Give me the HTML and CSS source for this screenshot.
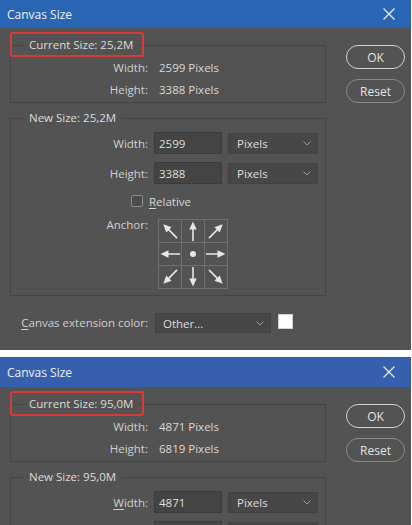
FILE: index.html
```html
<!DOCTYPE html>
<html lang="en">
<head>
  <meta charset="UTF-8">
  <meta name="viewport" content="width=device-width, initial-scale=1.0">
  <title>Canvas Size</title>
  <link rel="stylesheet" href="styles.css">
</head>
<body>
  <!-- shared arrow glyph for the anchor grid -->
  <svg class="defs" width="0" height="0" aria-hidden="true">
    <symbol id="arrow" viewBox="0 0 22 22">
      <line x1="11" y1="8" x2="11" y2="21" stroke="#e6e6e6" stroke-width="1.6"/>
      <polygon points="11,1.5 7.3,9.5 14.7,9.5" fill="#e6e6e6"/>
    </symbol>
    <symbol id="chevron" viewBox="0 0 8 5">
      <polyline points="0.5,0.5 4,4 7.5,0.5" fill="none" stroke="#9c9c9c" stroke-width="1"/>
    </symbol>
    <symbol id="close" viewBox="0 0 12 12">
      <line x1="0.5" y1="0.5" x2="11.5" y2="11.5" stroke="#e6ecf6" stroke-width="1.3"/>
      <line x1="11.5" y1="0.5" x2="0.5" y2="11.5" stroke="#e6ecf6" stroke-width="1.3"/>
    </symbol>
  </svg>

  <div class="screen">

    <div class="dialog">
      <div class="titlebar">
        <span>Canvas Size</span>
        <svg class="close" width="12" height="12"><use href="#close"/></svg>
      </div>
      <div class="dialog-body">
        <div class="main">
          <fieldset class="group current">
            <legend>Current Size: 25,2M<span class="highlight"></span></legend>
            <div class="row"><span class="label">Width:</span><span class="value">2599 Pixels</span></div>
            <div class="row"><span class="label">Height:</span><span class="value">3388 Pixels</span></div>
          </fieldset>

          <fieldset class="group new">
            <legend>New Size: 25,2M</legend>
            <div class="row">
              <span class="label">Width:</span>
              <div class="fields">
                <input class="field" type="text" value="2599">
                <div class="select"><span>Pixels</span><svg width="8" height="5"><use href="#chevron"/></svg></div>
              </div>
            </div>
            <div class="row">
              <span class="label">Height:</span>
              <div class="fields">
                <input class="field" type="text" value="3388">
                <div class="select"><span>Pixels</span><svg width="8" height="5"><use href="#chevron"/></svg></div>
              </div>
            </div>
            <div class="check-row">
              <span class="checkbox"></span>
              <span><u>R</u>elative</span>
            </div>
            <div class="row anchor-row">
              <span class="label">Anchor:</span>
              <div class="anchor">
                <span class="cell"><svg class="nw"><use href="#arrow"/></svg></span>
                <span class="cell"><svg><use href="#arrow"/></svg></span>
                <span class="cell"><svg class="ne"><use href="#arrow"/></svg></span>
                <span class="cell"><svg class="w"><use href="#arrow"/></svg></span>
                <span class="cell"><svg viewBox="0 0 22 22"><circle cx="11" cy="11" r="3" fill="#e6e6e6"/></svg></span>
                <span class="cell"><svg class="e"><use href="#arrow"/></svg></span>
                <span class="cell"><svg class="sw"><use href="#arrow"/></svg></span>
                <span class="cell"><svg class="s"><use href="#arrow"/></svg></span>
                <span class="cell"><svg class="se"><use href="#arrow"/></svg></span>
              </div>
            </div>
          </fieldset>

          <div class="ext-row">
            <span class="label"><u>C</u>anvas extension color:</span>
            <div class="select wide"><span>Other...</span><svg width="8" height="5"><use href="#chevron"/></svg></div>
            <span class="swatch"></span>
          </div>
        </div>

        <div class="actions">
          <button class="btn primary">OK</button>
          <button class="btn">Reset</button>
        </div>
      </div>
    </div>

    <div class="dialog second">
      <div class="titlebar">
        <span>Canvas Size</span>
        <svg class="close" width="12" height="12"><use href="#close"/></svg>
      </div>
      <div class="dialog-body">
        <div class="main">
          <fieldset class="group current">
            <legend>Current Size: 95,0M<span class="highlight"></span></legend>
            <div class="row"><span class="label">Width:</span><span class="value">4871 Pixels</span></div>
            <div class="row"><span class="label">Height:</span><span class="value">6819 Pixels</span></div>
          </fieldset>

          <fieldset class="group new">
            <legend>New Size: 95,0M</legend>
            <div class="row">
              <span class="label"><u>W</u>idth:</span>
              <div class="fields">
                <input class="field" type="text" value="4871">
                <div class="select"><span>Pixels</span><svg width="8" height="5"><use href="#chevron"/></svg></div>
              </div>
            </div>
            <div class="row">
              <span class="label"><u>H</u>eight:</span>
              <div class="fields">
                <input class="field" type="text" value="6819">
                <div class="select"><span>Pixels</span><svg width="8" height="5"><use href="#chevron"/></svg></div>
              </div>
            </div>
          </fieldset>
        </div>

        <div class="actions">
          <button class="btn primary">OK</button>
          <button class="btn">Reset</button>
        </div>
      </div>
    </div>

  </div>
</body>
</html>
```

FILE: styles.css
```css
html, body {
  margin: 0;
  padding: 0;
}

body {
  background-color: #ffffff;
  font-family: 'Open Sans', 'Noto Sans', sans-serif;
  font-size: 11.5px;
  color: #d6d6d6;
}

.defs {
  position: absolute;
  width: 0;
  height: 0;
}

.screen {
  height: 525px;
  overflow: hidden;
}

u {
  text-decoration: underline;
  text-underline-offset: 2px;
}

/* Dialog window */
.dialog {
  width: 411px;
  background-color: #535353;
}

.dialog + .dialog {
  margin-top: 7px;
}

.titlebar {
  height: 28px;
  background-color: #2b66b4;
  color: #eef2f9;
  font-size: 12px;
  display: flex;
  align-items: center;
  justify-content: space-between;
  padding: 0 16px 0 7px;
}

.dialog.second .titlebar {
  height: 30px;
  background-color: #3660ad;
}

.close {
  display: block;
}

.dialog-body {
  display: flex;
  align-items: flex-start;
  height: 322px;
}

.main {
  margin-left: 10px;
  width: 316px;
  padding-top: 9px;
}

/* Group boxes */
.group {
  margin: 0;
  padding: 3px 0 2px;
  border: 1px solid #454545;
  min-width: 0;
}

.group legend {
  position: relative;
  margin-left: 12px;
  padding: 0 6px;
  line-height: 16px;
  color: #dadada;
}

.group.new {
  margin-top: 7px;
  padding: 6px 0 6px;
}

.highlight {
  position: absolute;
  left: -13px;
  right: -5px;
  top: -5px;
  bottom: -4px;
  border: 2px solid #d8393a;
  border-radius: 2px;
}

.row {
  display: grid;
  grid-template-columns: 137px 1fr;
  column-gap: 6px;
  height: 22px;
  align-items: center;
}

.group.new .row + .row {
  margin-top: 8px;
}

.label {
  text-align: right;
  color: #cfcfcf;
}

.value {
  padding-left: 5px;
  color: #d8d8d8;
}

.fields {
  display: flex;
  align-items: center;
}

.field {
  box-sizing: border-box;
  width: 68px;
  height: 22px;
  margin: 0;
  padding: 0 0 0 4px;
  background-color: #444444;
  border: 1px solid #3c3c3c;
  color: #dedede;
  font: inherit;
  outline: none;
}

.select {
  box-sizing: border-box;
  width: 90px;
  height: 21px;
  margin-left: 6px;
  padding: 0 6px 0 8px;
  display: flex;
  align-items: center;
  justify-content: space-between;
  background-color: #474747;
  border: 1px solid #424242;
  color: #dedede;
}

.select svg {
  display: block;
}

.check-row {
  display: flex;
  align-items: center;
  height: 22px;
  margin-top: 6px;
  padding-left: 120px;
  color: #d6d6d6;
}

.checkbox {
  box-sizing: border-box;
  width: 12px;
  height: 12px;
  margin-right: 6px;
  border: 1px solid #8c8c8c;
  border-radius: 2px;
  background-color: #4b4b4b;
}

/* Anchor grid */
.anchor-row {
  height: auto;
  align-items: start;
  margin-top: 7px;
}

.anchor-row .label {
  line-height: 16px;
  margin-top: -2px;
}

.anchor {
  margin-left: 4px;
  width: 70px;
  display: grid;
  grid-template-columns: repeat(3, 22px);
  grid-auto-rows: 22px;
  gap: 1px;
  padding: 1px;
  box-sizing: border-box;
  background-color: #6f6f6f;
}

.cell {
  background-color: #535353;
}

.cell svg {
  display: block;
  width: 22px;
  height: 22px;
}

.cell .ne { transform: rotate(45deg); }
.cell .e  { transform: rotate(90deg); }
.cell .se { transform: rotate(135deg); }
.cell .s  { transform: rotate(180deg); }
.cell .sw { transform: rotate(225deg); }
.cell .w  { transform: rotate(270deg); }
.cell .nw { transform: rotate(315deg); }

/* Extension color */
.ext-row {
  display: flex;
  align-items: flex-start;
  margin-top: 17px;
}

.ext-row .label {
  width: 138px;
  line-height: 20px;
}

.select.wide {
  width: 116px;
  height: 20px;
  margin-left: 7px;
  padding-left: 7px;
}

.swatch {
  box-sizing: border-box;
  width: 15px;
  height: 15px;
  margin: 1px 0 0 7px;
  background-color: #ffffff;
  border: 1px solid #d0d0d0;
}

/* Buttons */
.actions {
  margin-left: 20px;
  padding-top: 17px;
  display: flex;
  flex-direction: column;
  gap: 10px;
}

.btn {
  box-sizing: border-box;
  width: 59px;
  height: 24px;
  padding: 0;
  border-radius: 12px;
  border: 1px solid #8a8a8a;
  background: transparent;
  color: #e2e2e2;
  font: inherit;
  font-size: 12px;
}

.btn.primary {
  border: 1.5px solid #d2d2d2;
}
```
